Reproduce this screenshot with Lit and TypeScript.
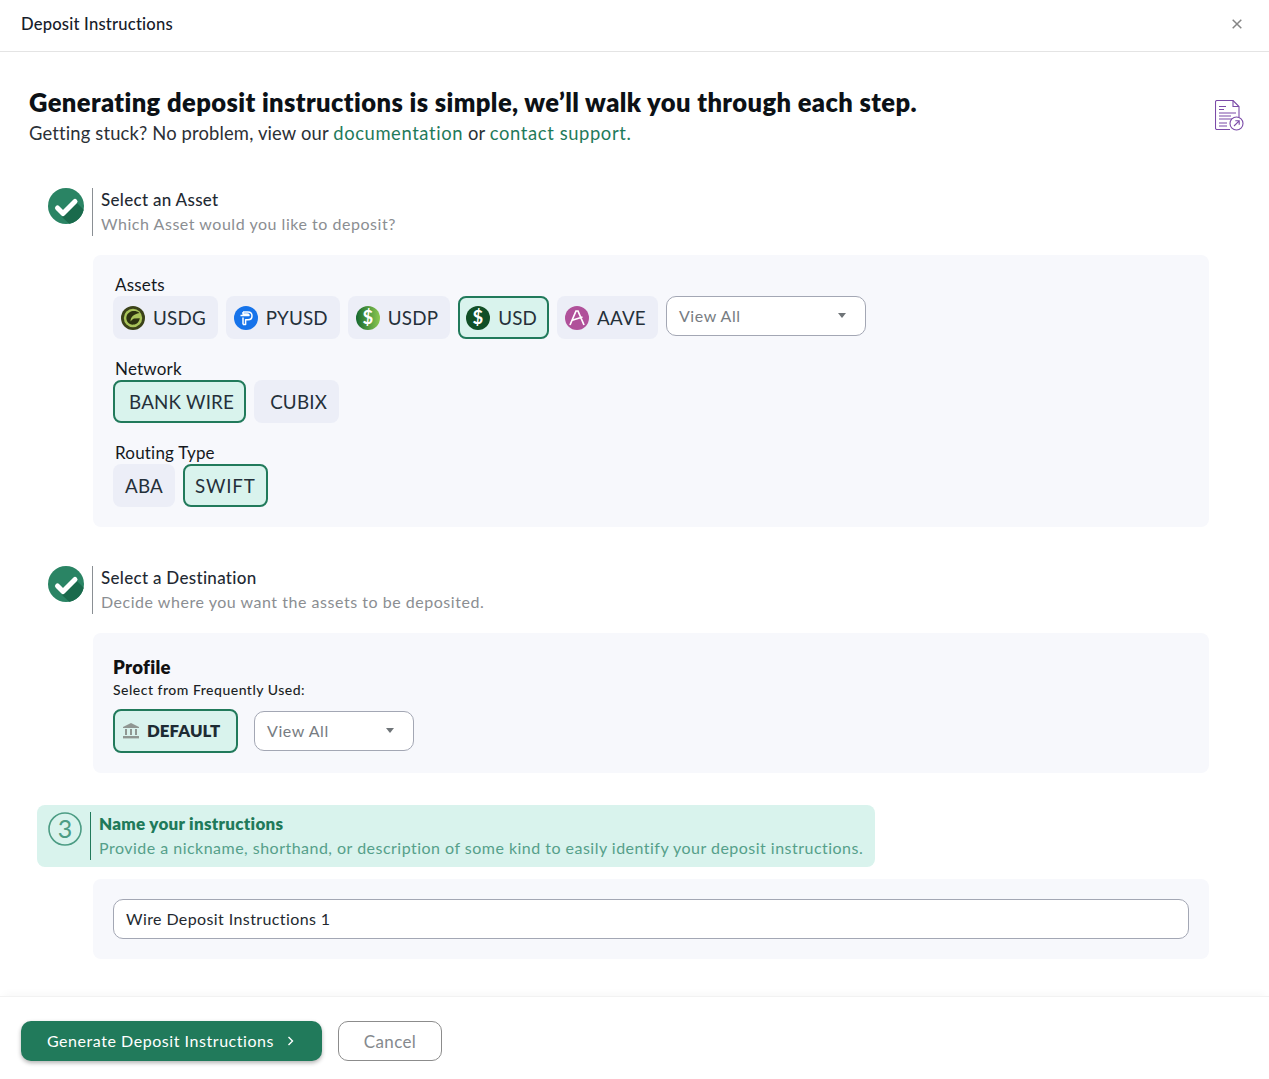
import { LitElement, html, css, svg } from "lit";
import { customElement } from "lit/decorators.js";

const check = (id: string) => html`<svg class="badge" width="36" height="36" viewBox="0 0 36 36">
  <defs><clipPath id=${id}><circle cx="18" cy="18" r="18"/></clipPath></defs>
  <circle cx="18" cy="18" r="18" fill="#2a8464"/>
  <path d="M14 29 L28 14 L44 30 L30 44 Z" fill="#1a6a4c" clip-path="url(#${id})"/>
  <path d="M9.5 20 L15 25.5 L27 13.5" fill="none" stroke="#fff" stroke-width="5" stroke-linecap="round" stroke-linejoin="round"/>
</svg>`;

const coin = (inner: unknown) => html`<svg class="coin" width="24" height="24" viewBox="0 0 24 24">${inner}</svg>`;

const dollar = (fill: string) => svg`<text x="12" y="18.2" text-anchor="middle" font-family="Lato,sans-serif" font-weight="700" font-size="18.5" fill=${fill}>$</text>`;

const icons: Record<string, unknown> = {
  USDG: coin(svg`<circle cx="12" cy="12" r="12" fill="#3b4219"/><circle cx="12" cy="12" r="9.2" fill="#a9c45a"/>
    <path d="M18.5 7 C14 3.5 7 5 5.5 10.5 C4.5 15 8 19 12.5 18.6 C16 18.3 18.2 15.8 18.8 12.2 L13 12.4 C11.6 13 10.6 14.2 9.6 15.4 C9.2 11.5 12.8 8 18.5 7 Z" fill="#2c3210"/>`),
  PYUSD: coin(svg`<circle cx="12" cy="12" r="12" fill="#1673ea"/>
    <path d="M9 18.5 L9 11.5 M9 6 L14 6 C16.6 6 18 7.8 18 10 C18 12.2 16.4 13.8 14 13.8 L11.6 13.8 L11.6 18.5 L9 18.5 M6.5 9.6 L15 9.6 C15 8.4 14.3 8 13.4 8 L9 8 L9 6" fill="none" stroke="#fff" stroke-width="1.5" stroke-linejoin="round"/>`),
  USDP: coin(svg`<defs><linearGradient id="gp" x1="0" y1="0.5" x2="1" y2="0.5"><stop offset="0" stop-color="#14682f"/><stop offset="1" stop-color="#8cc850"/></linearGradient></defs>
    <circle cx="12" cy="12" r="12" fill="url(#gp)"/>${dollar("#fff")}`),
  USD: coin(svg`<circle cx="12" cy="12" r="12" fill="#114f26"/>${dollar("#fff")}`),
  AAVE: coin(svg`<circle cx="12" cy="12" r="12" fill="#b0519a"/>
    <path d="M5 19 L11 5 L13 5 L19 19 M6.5 14.5 L17.5 11" fill="none" stroke="#fff" stroke-width="1.7"/>`),
};

const caret = html`<span class="caret"></span>`;

@customElement("app-root")
export class AppRoot extends LitElement {
  static styles = css`
    :host { display: block; height: 1079px; overflow: hidden; background: #fff; color: #1f2a33;
      font-family: "Lato", "Open Sans", sans-serif; position: relative; }
    * { box-sizing: border-box; }
    .top { height: 52px; border-bottom: 1px solid #e4e4e4; display: flex; align-items: center;
      justify-content: space-between; padding: 0 27px 4px 21px; }
    .top h2 { margin: 0; font-size: 16.6px; font-weight: 500; color: #17202a; letter-spacing: .2px; }
    .close { display: block; }
    main { padding: 36px 24px 0 29px; height: 944px; }
    .intro { display: flex; justify-content: space-between; height: 100px; }
    .intro h1 { margin: 0; font-size: 25.5px; line-height: 29px; font-weight: 800; color: #0c1116; letter-spacing: .4px; }
    .intro p { margin: 3px 0 0; font-size: 18.4px; line-height: 26px; color: #2b3036; letter-spacing: .15px; }
    .intro a { color: #1f7a5a; text-decoration: none; letter-spacing: .6px; }
    .doc { margin-top: 12px; }
    .step { display: flex; align-items: flex-start; padding-left: 19px; height: 48px; }
    .badge { flex: none; margin-right: 8px; }
    .copy { border-left: 1px solid #8a8f94; height: 48px; padding-left: 8px; }
    .copy b { display: block; font-size: 17px; font-weight: 500; line-height: 24px; color: #1f2a33; letter-spacing: .3px; }
    .copy span { display: block; font-size: 16px; line-height: 24px; color: #8b8e92; letter-spacing: .53px; }
    .panel { margin: 19px 36px 0 64px; background: #f7f8fc; border-radius: 8px; padding: 20px; }
    .label { font-size: 17px; line-height: 19px; height: 21px; color: #15191d; padding-left: 2px; letter-spacing: .2px; }
    .row { display: flex; gap: 8px; align-items: flex-start; margin-bottom: 20px; }
    .row:last-child { margin-bottom: 0; }
    .chip { height: 43px; border-radius: 8px; background: #eceef7; display: flex; align-items: center; gap: 8px;
      font-size: 18.8px; color: #25303a; border: 2px solid transparent; letter-spacing: .2px; white-space: nowrap; }
    .t { margin-top: -1px; }
    .chip.on { background: #d9f3ed; border-color: #217a5b; }
    .chip.net { padding: 0 10px 0 14px; }
    .chip.route { padding: 0 10px; }
    .chip.wide { letter-spacing: .8px; }
    .chip.coined { padding: 0 10px 0 6px; }
    .coin { flex: none; }
    .select { height: 40px; background: #fff; border: 1px solid #a3a7b4; border-radius: 10px; display: flex; align-items: center;
      justify-content: space-between; padding: 0 19px 2px 12px; font-size: 16px; color: #777c82; letter-spacing: .58px; }
    .caret { width: 0; height: 0; border-left: 4.5px solid transparent; border-right: 4.5px solid transparent; border-top: 5px solid #6f7478; margin-top: 1px; }
    .s1 { width: 200px; }
    .s2 { width: 160px; margin-left: 8px; margin-top: 2px; }
    .gap-a { margin-top: 39px; }
    .profile { height: 140px; }
    .profile h3 { margin: 2px 0 0; font-size: 18.6px; line-height: 24px; font-weight: 800; color: #111; letter-spacing: .3px; }
    .profile small { display: block; font-size: 14px; line-height: 18px; font-weight: 500; color: #1b1f24; margin-top: 2px; letter-spacing: .5px; }
    .profile .row { margin: 10px 0 0; }
    .def { height: 44px; width: 125px; font-weight: 800; font-size: 16.8px; padding: 0 7px; gap: 7px; letter-spacing: .1px; color: #1d2b33; }
    .name { margin: 32px 0 0 8px; width: 838px; height: 62px; background: #d9f3ed; border-radius: 8px; display: flex; padding: 7px 0 0 11px; }
    .name .num { flex: none; margin-right: 8px; }
    .name .copy { border-color: #217a5b; padding-left: 8px; }
    .name .copy b { font-weight: 800; color: #1f7a5a; letter-spacing: .27px; }
    .name .copy span { color: #55a08a; letter-spacing: .48px; }
    .input-panel { margin-top: 12px; height: 80px; }
    .input { height: 40px; background: #fff; border: 1px solid #a3a7b4; border-radius: 10px; display: flex; align-items: center;
      padding: 0 12px 2px; font-size: 16px; color: #23292f; letter-spacing: .4px; }
    footer { height: 83px; border-top: 1px solid #f2f2f2; box-shadow: 0 -6px 8px -4px rgba(0,0,0,.035); padding: 24px 0 0 21px; display: flex; gap: 16px; background: #fff; }
    .btn { height: 40px; border-radius: 10px; display: flex; align-items: center; justify-content: center; font-size: 17px; letter-spacing: .34px; }
    .go { width: 301px; background: #217a5b; color: #fff; box-shadow: 0 2px 4px rgba(0,0,0,.3); gap: 13px; font-size: 16px; letter-spacing: .55px; padding: 0 2px 2px 0; }
    .go svg { margin-top: 2px; }
    .cancel { width: 104px; border: 1px solid #8c8c8c; color: #85898d; background: #fff; }
  `;

  render() {
    return html`
      <div class="top">
        <h2>Deposit Instructions</h2>
        <svg class="close" width="10" height="10" viewBox="0 0 10 10"><path d="M.7.7 9.3 9.3M9.3.7.7 9.3" stroke="#858585" stroke-width="1.5"/></svg>
      </div>
      <main>
        <div class="intro">
          <div>
            <h1>Generating deposit instructions is simple, we’ll walk you through each step.</h1>
            <p>Getting stuck? No problem, view our <a>documentation</a> or <a>contact support.</a></p>
          </div>
          <svg class="doc" width="30" height="32" viewBox="0 0 30 32" fill="none" stroke="#7b4ba8" stroke-width="1.1">
            <path d="M15 29.5 H2 a1.5 1.5 0 0 1-1.5-1.5 V2 A1.5 1.5 0 0 1 2 .5 H18 L24 6.5 V17"/>
            <path d="M18 .5 V6.5 H24"/>
            <path d="M4 6.5h7M4 9.5h5M4 13h17M4 16h12M4 19h13M4 23h8M4 26h8"/>
            <circle cx="21.5" cy="23.5" r="6.5" fill="#fff"/>
            <path d="M19 26 L24.2 20.8 M20.3 20.8 H24.2 V24.7"/>
          </svg>
        </div>

        <div class="step">${check("c1")}
          <div class="copy"><b>Select an Asset</b><span>Which Asset would you like to deposit?</span></div>
        </div>
        <div class="panel">
          <div class="label">Assets</div>
          <div class="row">
            ${["USDG", "PYUSD", "USDP"].map((n) => html`<div class="chip coined">${icons[n]}<span class="t">${n}</span></div>`)}
            <div class="chip coined on">${icons.USD}<span class="t">USD</span></div>
            <div class="chip coined">${icons.AAVE}<span class="t">AAVE</span></div>
            <div class="select s1">View All ${caret}</div>
          </div>
          <div class="label">Network</div>
          <div class="row">
            <div class="chip net on"><span class="t">BANK WIRE</span></div>
            <div class="chip net"><span class="t">CUBIX</span></div>
          </div>
          <div class="label">Routing Type</div>
          <div class="row">
            <div class="chip route"><span class="t">ABA</span></div>
            <div class="chip route wide on"><span class="t">SWIFT</span></div>
          </div>
        </div>

        <div class="step gap-a">${check("c2")}
          <div class="copy"><b>Select a Destination</b><span>Decide where you want the assets to be deposited.</span></div>
        </div>
        <div class="panel profile">
          <h3>Profile</h3>
          <small>Select from Frequently Used:</small>
          <div class="row">
            <div class="chip def on">
              <svg width="18" height="16" viewBox="0 0 18 16" fill="#8f9792"><path d="M9 0 L17 4 V5 H1 V4 Z"/><rect x="3" y="6" width="2" height="6"/><rect x="8" y="6" width="2" height="6"/><rect x="13" y="6" width="2" height="6"/><rect x="1" y="13" width="16" height="2.4"/></svg>
              <span class="t">DEFAULT</span>
            </div>
            <div class="select s2">View All ${caret}</div>
          </div>
        </div>

        <div class="name">
          <svg class="num" width="34" height="34" viewBox="0 0 34 34">
            <circle cx="17" cy="17" r="16" fill="none" stroke="#4c9c84" stroke-width="1.6"/>
            <text x="17" y="25.5" text-anchor="middle" font-family="Lato,sans-serif" font-size="25" fill="#4c9c84">3</text>
          </svg>
          <div class="copy"><b>Name your instructions</b><span>Provide a nickname, shorthand, or description of some kind to easily identify your deposit instructions.</span></div>
        </div>
        <div class="panel input-panel">
          <div class="input">Wire Deposit Instructions 1</div>
        </div>
      </main>
      <footer>
        <div class="btn go">Generate Deposit Instructions
          <svg width="7" height="10" viewBox="0 0 7 10"><path d="M1.5 1 L5.5 5 L1.5 9" fill="none" stroke="#fff" stroke-width="1.4"/></svg>
        </div>
        <div class="btn cancel">Cancel</div>
      </footer>
    `;
  }
}
